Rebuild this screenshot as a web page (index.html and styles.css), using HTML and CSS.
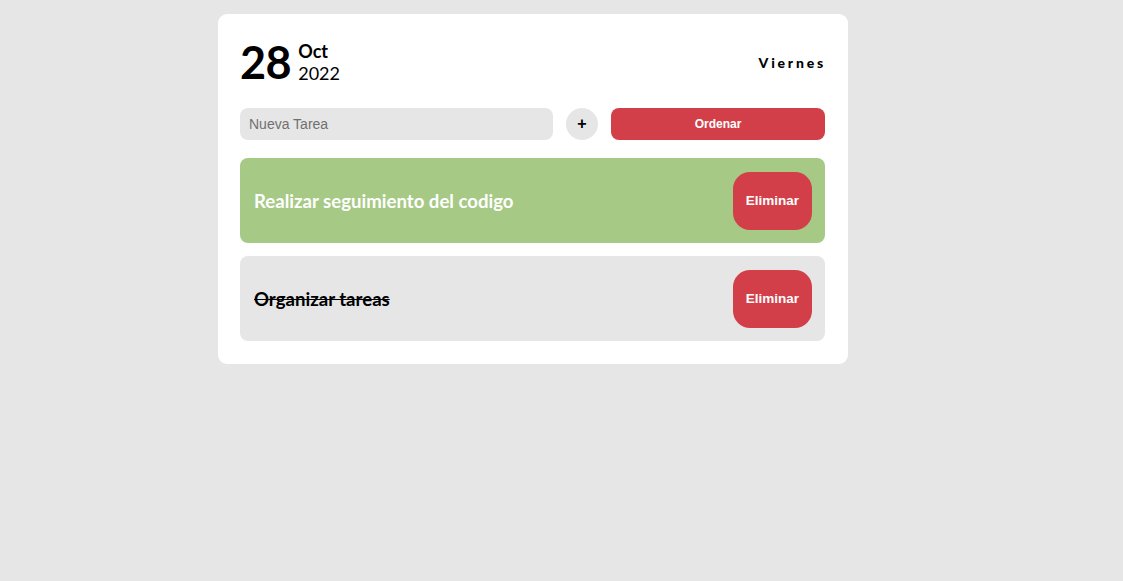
FILE: index.html
```html
<!DOCTYPE html>
<html lang="es">
<head>
<meta charset="utf-8">
<title>Tareas</title>
<link rel="stylesheet" href="styles.css">
</head>
<body>
<main class="card">
  <header class="head">
    <div class="date">
      <span class="day">28</span>
      <div class="month-year">
        <span class="month">Oct</span>
        <span class="year">2022</span>
      </div>
    </div>
    <div class="weekday">Viernes</div>
  </header>
  <form class="new-task">
    <input class="task-input" type="text" placeholder="Nueva Tarea">
    <button class="add" type="button">+</button>
    <button class="order" type="button">Ordenar</button>
  </form>
  <ul class="tasks">
    <li class="task done">
      <span class="task-text">Realizar seguimiento del codigo</span>
      <button class="delete" type="button">Eliminar</button>
    </li>
    <li class="task struck">
      <span class="task-text">Organizar tareas</span>
      <button class="delete" type="button">Eliminar</button>
    </li>
  </ul>
</main>
</body>
</html>
```
FILE: styles.css
```css
* { box-sizing: border-box; }
html, body { margin: 0; padding: 0; }
body {
  background: #e6e6e6;
  font-family: Lato, "Liberation Sans", sans-serif;
  padding-top: 14px;
  padding-left: 218px;
}
.card {
  width: 630px;
  background: #fff;
  border-radius: 9px;
  padding: 20px 23px 23px 22px;
}
.head {
  display: flex;
  justify-content: space-between;
  align-items: center;
  height: 56px;
}
.date {
  display: flex;
  align-items: center;
  gap: 7px;
}
.day {
  font-size: 45px;
  font-weight: 700;
  line-height: 1;
  letter-spacing: -0.5px;
}
.month-year {
  display: flex;
  flex-direction: column;
  font-size: 18px;
  line-height: 22px;
}
.month { font-weight: 700; }
.year { font-weight: 400; }
.weekday {
  font-weight: 900;
  font-size: 14px;
  line-height: 17px;
  letter-spacing: 2.8px;
  margin-right: -1px;
}
.new-task {
  display: flex;
  gap: 13px;
  margin: 18px 0 18px;
}
.task-input {
  width: 313px;
  height: 32px;
  border: none;
  border-radius: 8px;
  background: #e6e6e6;
  padding: 0 9px;
  font-family: "Liberation Sans", Arial, sans-serif;
  font-size: 14px;
  color: #333;
  outline: none;
}
.task-input::placeholder { color: #707070; }
.add {
  width: 32px;
  height: 32px;
  border: none;
  border-radius: 50%;
  background: #e6e6e6;
  font-family: "Liberation Sans", Arial, sans-serif;
  font-weight: 700;
  font-size: 16px;
  color: #000;
  padding: 0;
}
.order {
  flex: 1;
  height: 32px;
  border: none;
  border-radius: 8px;
  background: #d33f49;
  color: #fff;
  font-family: "Liberation Sans", Arial, sans-serif;
  font-weight: 700;
  font-size: 12px;
}
.tasks {
  list-style: none;
  margin: 0;
  padding: 0;
  display: flex;
  flex-direction: column;
  gap: 13px;
}
.task {
  height: 85px;
  border-radius: 8px;
  background: #e6e6e6;
  display: flex;
  align-items: center;
  justify-content: space-between;
  padding: 0 13px 0 14px;
}
.task.done { background: #a6c985; }
.task-text {
  font-weight: 700;
  font-size: 18.6px;
}
.done .task-text { color: #fff; }
.struck .task-text { color: #000; text-decoration: line-through; }
.delete {
  width: 79px;
  height: 58px;
  border: none;
  border-radius: 17px;
  background: #d33f49;
  color: #fff;
  font-family: "Liberation Sans", Arial, sans-serif;
  font-weight: 700;
  font-size: 13.5px;
  padding: 0;
}
```
